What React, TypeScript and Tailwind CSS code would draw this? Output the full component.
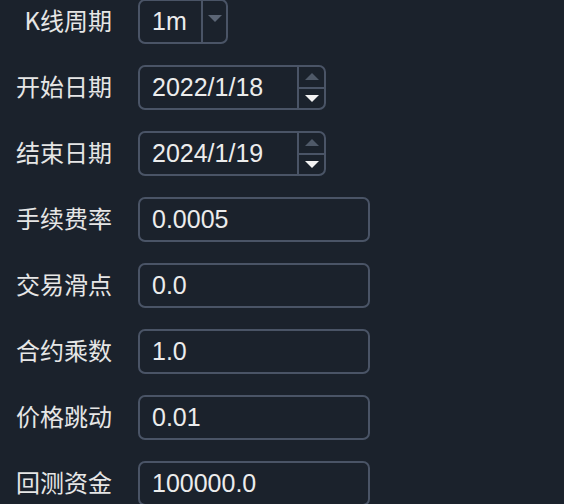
const labelFont = { fontFamily: '"Noto Sans CJK SC", "Noto Sans", sans-serif' };

function Label({ text }: { text: string }) {
  return (
    <div
      className="w-[112px] shrink-0 pb-[4px] text-right text-[24px] leading-none text-[#e6e6e6]"
      style={labelFont}
    >
      {text}
    </div>
  );
}

function Caret({ up, className }: { up?: boolean; className: string }) {
  return (
    <svg width="14" height="7" viewBox="0 0 14 7" className={className}>
      {up ? <path d="M7 0 L14 7 L0 7 Z" /> : <path d="M0 0 L14 0 L7 7 Z" />}
    </svg>
  );
}

function ComboBox({ value }: { value: string }) {
  return (
    <div className="flex h-[45px] w-[90px] rounded-[7px] border-2 border-[#4a5466]">
      <div className="flex flex-1 items-center pl-3 text-[25px] text-[#ececec] font-['Liberation_Sans',sans-serif]">
        {value}
      </div>
      <div className="flex w-[25px] items-start justify-center border-l-2 border-[#4a5466] pt-[14px]">
        <Caret className="fill-[#5b6575]" />
      </div>
    </div>
  );
}

function DateBox({ value }: { value: string }) {
  return (
    <div className="flex h-[45px] w-[188px] rounded-[7px] border-2 border-[#4a5466]">
      <div className="flex flex-1 items-center pl-3 text-[25px] text-[#ececec] font-['Liberation_Sans',sans-serif]">
        {value}
      </div>
      <div className="flex w-[27px] flex-col border-l-2 border-[#4a5466]">
        <div className="flex flex-1 items-center justify-center border-b-2 border-[#4a5466]">
          <Caret up className="fill-[#4f5968]" />
        </div>
        <div className="flex flex-1 items-center justify-center">
          <Caret className="fill-[#f2f2f2]" />
        </div>
      </div>
    </div>
  );
}

function TextBox({ value }: { value: string }) {
  return (
    <div className="flex h-[45px] w-[232px] items-center rounded-[7px] border-2 border-[#4a5466] pl-3 text-[25px] text-[#ececec] font-['Liberation_Sans',sans-serif]">
      {value}
    </div>
  );
}

const fields = [
  { label: "手续费率", value: "0.0005" },
  { label: "交易滑点", value: "0.0" },
  { label: "合约乘数", value: "1.0" },
  { label: "价格跳动", value: "0.01" },
  { label: "回测资金", value: "100000.0" },
];

export default function App() {
  return (
    <div className="h-[504px] overflow-hidden bg-[#1b222c]">
      <div className="-mt-px flex flex-col gap-[21px]">
        <div className="flex items-center gap-[26px]">
          <Label text="K线周期" />
          <ComboBox value="1m" />
        </div>
        <div className="flex items-center gap-[26px]">
          <Label text="开始日期" />
          <DateBox value="2022/1/18" />
        </div>
        <div className="flex items-center gap-[26px]">
          <Label text="结束日期" />
          <DateBox value="2024/1/19" />
        </div>
        {fields.map((f) => (
          <div key={f.label} className="flex items-center gap-[26px]">
            <Label text={f.label} />
            <TextBox value={f.value} />
          </div>
        ))}
      </div>
    </div>
  );
}
